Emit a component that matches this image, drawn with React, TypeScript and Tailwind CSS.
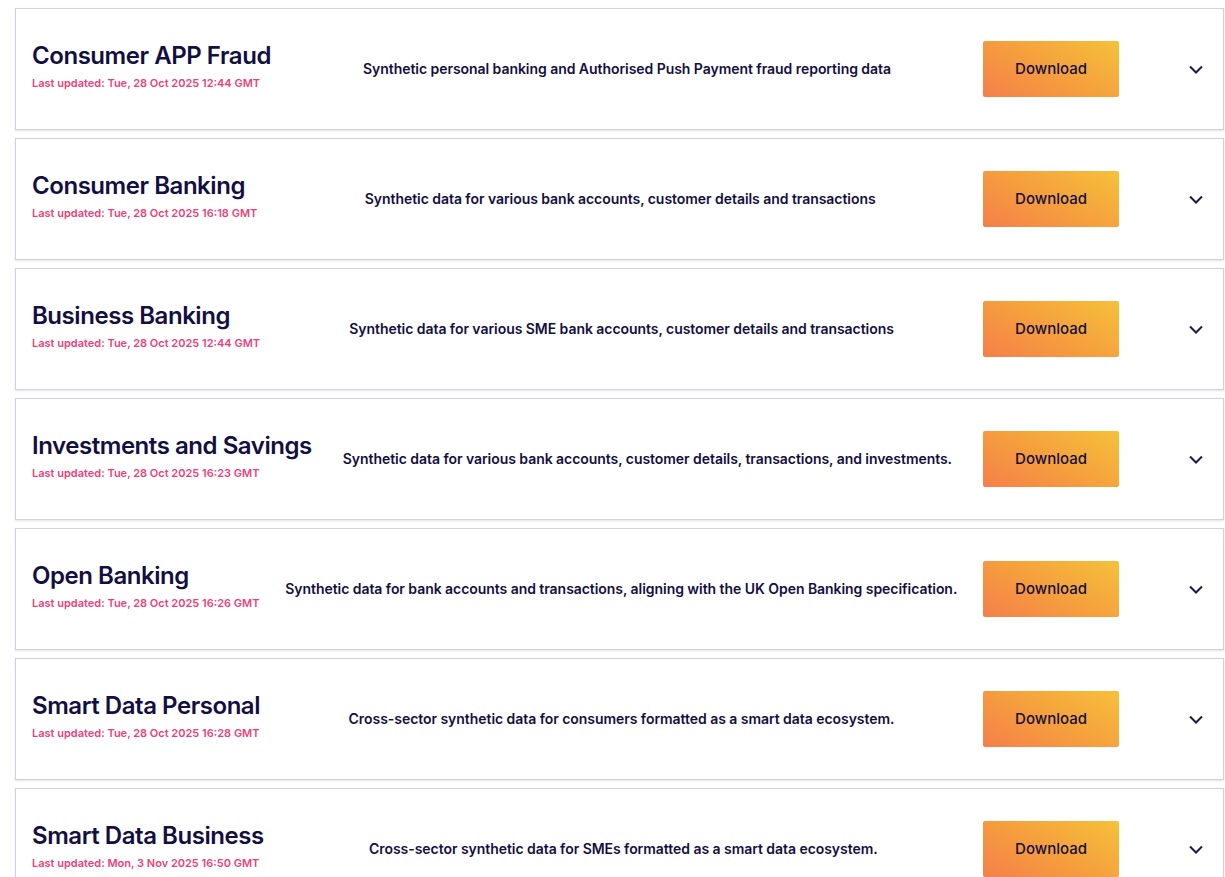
import React from "react";

const rows = [
  { title: "Consumer APP Fraud", date: "Tue, 28 Oct 2025 12:44 GMT", desc: "Synthetic personal banking and Authorised Push Payment fraud reporting data" },
  { title: "Consumer Banking", date: "Tue, 28 Oct 2025 16:18 GMT", desc: "Synthetic data for various bank accounts, customer details and transactions" },
  { title: "Business Banking", date: "Tue, 28 Oct 2025 12:44 GMT", desc: "Synthetic data for various SME bank accounts, customer details and transactions" },
  { title: "Investments and Savings", date: "Tue, 28 Oct 2025 16:23 GMT", desc: "Synthetic data for various bank accounts, customer details, transactions, and investments." },
  { title: "Open Banking", date: "Tue, 28 Oct 2025 16:26 GMT", desc: "Synthetic data for bank accounts and transactions, aligning with the UK Open Banking specification." },
  { title: "Smart Data Personal", date: "Tue, 28 Oct 2025 16:28 GMT", desc: "Cross-sector synthetic data for consumers formatted as a smart data ecosystem." },
  { title: "Smart Data Business", date: "Mon, 3 Nov 2025 16:50 GMT", desc: "Cross-sector synthetic data for SMEs formatted as a smart data ecosystem." },
];

export default function App() {
  return (
    <div className="min-h-screen bg-white pl-[15px] pr-[1px] pt-[8px] font-['Inter',sans-serif] text-[#130f40]">
      <div className="flex flex-col gap-[8px]">
        {rows.map((r) => (
          <div
            key={r.title}
            className="flex h-[122px] shrink-0 items-center border border-[#d2cfe0] bg-white pl-[16px] pr-[20px] shadow-[0_1px_2px_rgba(30,24,80,0.12)]"
          >
            <div className="mb-[8px] flex shrink-0 flex-col">
              <div className="text-[24px] font-semibold leading-[30px] tracking-[-0.45px] text-[#130f40]">{r.title}</div>
              <div className="mt-[5px] text-[11px] font-semibold leading-[14px] text-[#ec3f7a]">Last updated: {r.date}</div>
            </div>
            <div className="flex-1 whitespace-nowrap px-[18px] text-center text-[14px] font-semibold leading-[20px] tracking-[-0.05px] text-[#130f40]">{r.desc}</div>
            <button className="flex h-[56px] w-[136px] shrink-0 items-center justify-center rounded-[2px] bg-[linear-gradient(30deg,#f57f4a_0%,#f5a03d_50%,#f5c13a_100%)] pt-[1px] text-[15px] font-medium text-[#130f40]">
              Download
            </button>
            <div className="ml-[70px] flex h-[14px] w-[14px] items-center justify-center">
              <svg width="14" height="9" viewBox="0 0 14 9" fill="none">
                <path d="M1 1.5L7 7.5L13 1.5" stroke="#1e1850" strokeWidth="2" />
              </svg>
            </div>
          </div>
        ))}
      </div>
    </div>
  );
}
